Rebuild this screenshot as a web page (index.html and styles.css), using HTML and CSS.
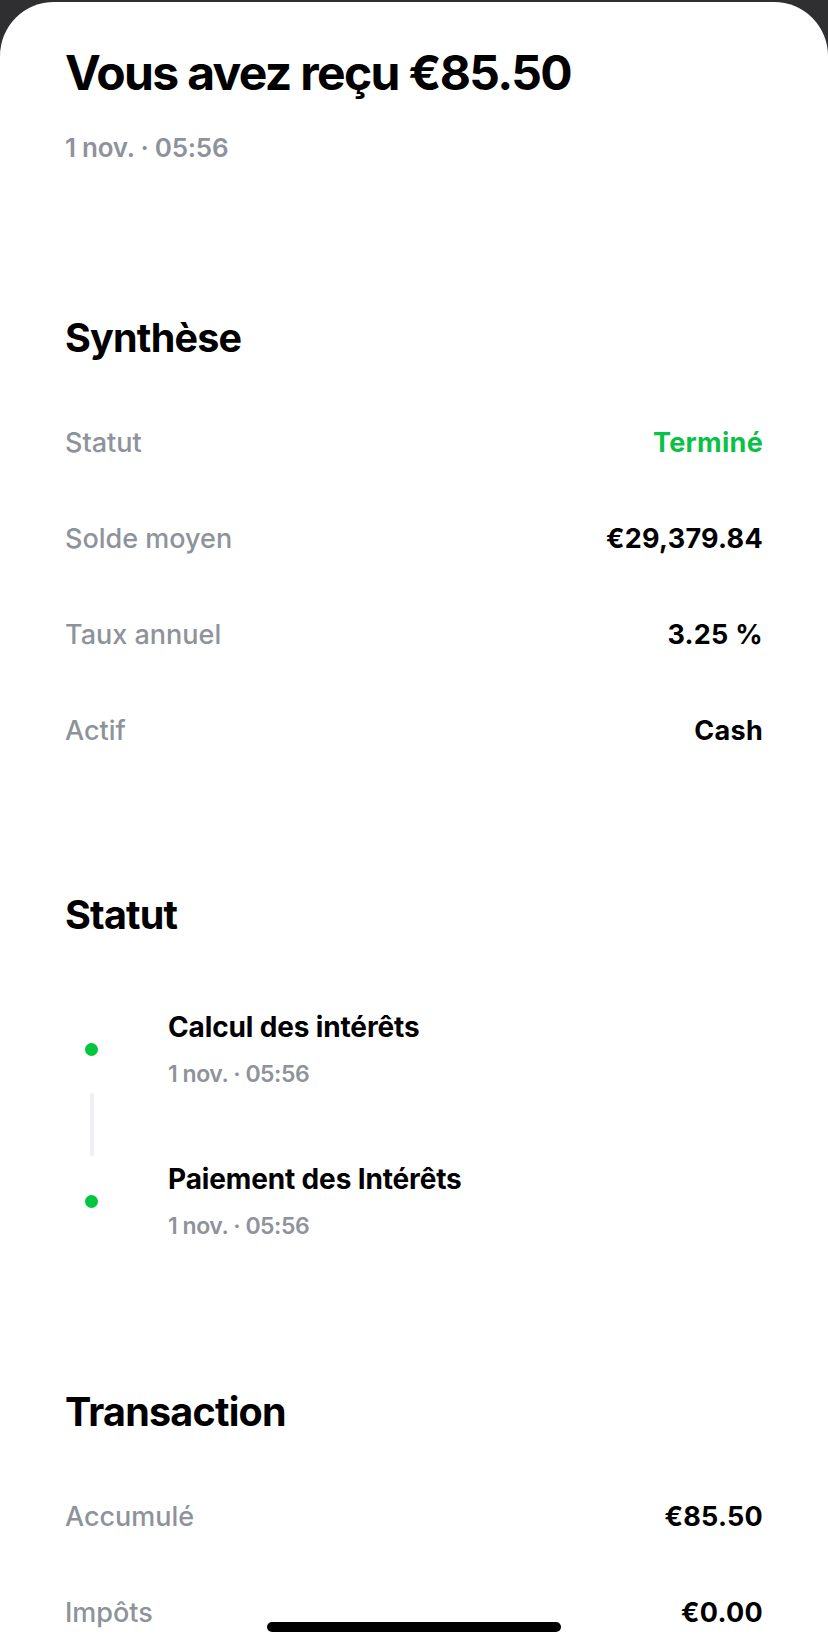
FILE: index.html
```html
<!DOCTYPE html>
<html lang="fr">
<head>
<meta charset="utf-8">
<title>Vous avez reçu €85.50</title>
<link rel="stylesheet" href="styles.css">
</head>
<body>
<main class="sheet">
  <header class="head">
    <h1 class="title">Vous avez reçu €85.50</h1>
    <p class="date">1 nov. · 05:56</p>
  </header>

  <section class="section synth">
    <h2 class="section-title">Synthèse</h2>
    <div class="rows">
      <div class="row"><span class="label">Statut</span><span class="value green">Terminé</span></div>
      <div class="row"><span class="label">Solde moyen</span><span class="value">€29,379.84</span></div>
      <div class="row"><span class="label">Taux annuel</span><span class="value">3.25 %</span></div>
      <div class="row"><span class="label">Actif</span><span class="value">Cash</span></div>
    </div>
  </section>

  <section class="section status">
    <h2 class="section-title">Statut</h2>
    <div class="timeline">
      <div class="step">
        <span class="rail"><span class="dot"></span></span>
        <div class="step-text">
          <span class="step-title">Calcul des intérêts</span>
          <span class="step-date">1 nov. · 05:56</span>
        </div>
      </div>
      <div class="connector"><span class="rail"><span class="line"></span></span></div>
      <div class="step">
        <span class="rail"><span class="dot"></span></span>
        <div class="step-text">
          <span class="step-title">Paiement des Intérêts</span>
          <span class="step-date">1 nov. · 05:56</span>
        </div>
      </div>
    </div>
  </section>

  <section class="section trans">
    <h2 class="section-title">Transaction</h2>
    <div class="rows">
      <div class="row"><span class="label">Accumulé</span><span class="value">€85.50</span></div>
      <div class="row"><span class="label">Impôts</span><span class="value">€0.00</span></div>
    </div>
  </section>
</main>
<div class="home-indicator"></div>
</body>
</html>
```

FILE: styles.css
```css
* { box-sizing: border-box; }
html, body { margin: 0; padding: 0; }
body {
  background: #2f2f31;
  font-family: Inter, "Noto Sans", "Liberation Sans", sans-serif;
  color: #000;
  height: 1648px;
  overflow: hidden;
}
.sheet {
  margin-top: 2px;
  background: #fff;
  border-radius: 54px 54px 0 0;
  min-height: 1646px;
  padding: 41px 65px 0 65px;
}
.head { display: flex; flex-direction: column; }
.title {
  margin: 0;
  font-size: 48px;
  line-height: 60px;
  font-weight: 700;
  letter-spacing: -1.66px;
}
.date {
  margin: 29px 0 0 0;
  font-size: 26px;
  line-height: 32px;
  font-weight: 600;
  color: #8e939b;
  letter-spacing: -0.01em;
}
.section-title {
  margin: 0;
  font-size: 39.5px;
  line-height: 48px;
  font-weight: 700;
  letter-spacing: -0.02em;
}
.synth { margin-top: 150px; }
.status { margin-top: 112px; }
.trans { margin-top: 148px; }
.rows { margin-top: 33px; display: flex; flex-direction: column; }
.row {
  height: 96px;
  display: flex;
  align-items: center;
  justify-content: space-between;
  font-size: 27px;
  line-height: 32px;
}
.row .label { color: #8e939b; font-weight: 500; letter-spacing: 0; }
.row .value { font-weight: 700; letter-spacing: 0.01em; }
.row .value.green { color: #0bc145; }

.timeline { margin-top: 72px; display: flex; flex-direction: column; }
.step { display: flex; align-items: center; height: 77px; }
.rail {
  width: 53px;
  flex: 0 0 53px;
  display: flex;
  justify-content: center;
  align-self: stretch;
  align-items: center;
}
.dot {
  width: 13px; height: 13px; border-radius: 50%;
  background: #00c53f;
}
.step-text {
  margin-left: 50px;
  display: flex;
  flex-direction: column;
}
.step-title {
  font-size: 28px;
  line-height: 32px;
  font-weight: 700;
  letter-spacing: -0.005em;
}
.step-date {
  margin-top: 17px;
  font-size: 23px;
  line-height: 28px;
  font-weight: 600;
  color: #8e939b;
  letter-spacing: -0.02em;
}
.connector { height: 75px; display: flex; }
.connector .rail { align-items: flex-start; padding-top: 5px; }
.line { width: 4px; height: 63px; background: #eeeef3; border-radius: 2px; }

.home-indicator {
  position: absolute;
  left: 267px;
  bottom: 16px;
  width: 294px;
  height: 10px;
  border-radius: 5px;
  background: #000;
}
```
